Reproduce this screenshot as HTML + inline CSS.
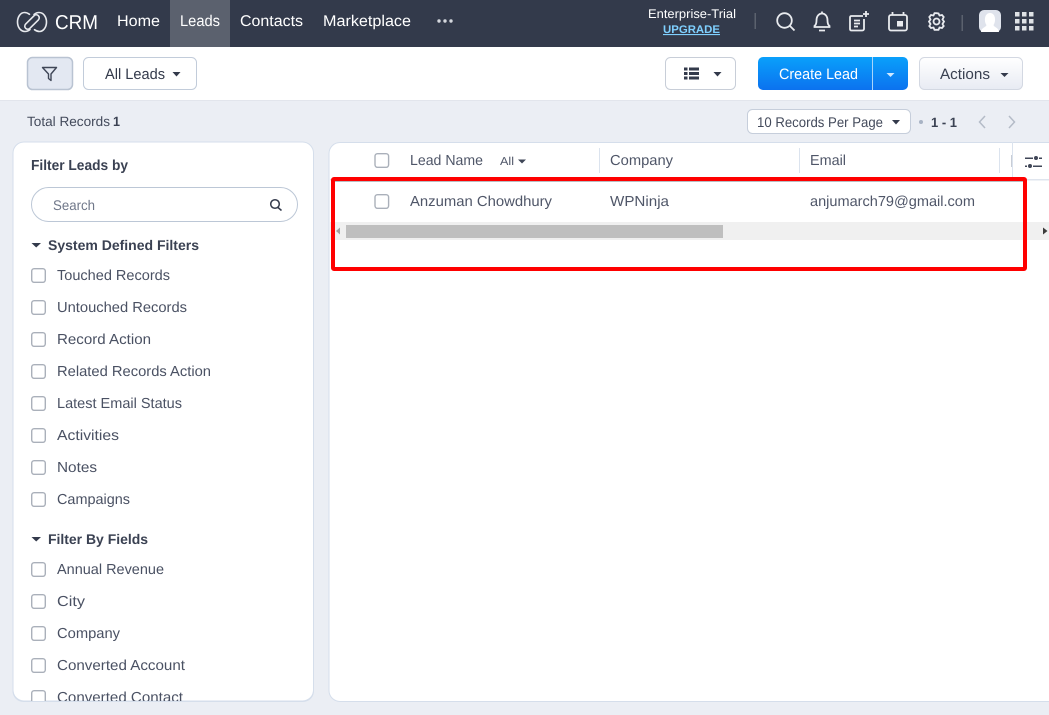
<!DOCTYPE html>
<html><head><meta charset="utf-8"><style>
html,body{margin:0;padding:0;width:1049px;height:715px;overflow:hidden;background:#ebeef4}
svg{display:block}
text{font-family:"Liberation Sans",sans-serif;font-size:14px;fill:#3f4657;text-rendering:geometricPrecision}
.n{fill:#fff;font-size:15.500px}
.f{fill:#4a5163;font-size:14.500px}
.b{font-weight:bold;fill:#3a4152}
.h{fill:#4f5668;font-size:14.500px}
</style></head><body>
<svg width="1049" height="715" viewBox="0 0 1049 715" xmlns="http://www.w3.org/2000/svg">
<defs>
<linearGradient id="bl" x1="0" y1="0" x2="0" y2="1"><stop offset="0" stop-color="#0aa0fb"/><stop offset="1" stop-color="#0b72ef"/></linearGradient>
<linearGradient id="gr" x1="0" y1="0" x2="0" y2="1"><stop offset="0" stop-color="#fff"/><stop offset="1" stop-color="#e8ebf3"/></linearGradient>
</defs>
<rect width="1049" height="715" fill="#ebeef4"/>
<rect y="47" width="1049" height="53" fill="#fff"/>
<rect y="100" width="1049" height="1" fill="#e2e5ec"/>
<rect width="1049" height="47" fill="#333a4b"/>
<rect x="170" width="60" height="47" fill="#5b616e"/>
<!-- logo -->
<g fill="none" stroke="#e8eaee" stroke-width="1.600" stroke-linecap="round">
<path d="M29.500 14.300C28 13.200 26.500 12.500 24.500 12.500C20.500 12.500 17.500 17 17.500 22C17.500 27 20.500 31.500 25 31.500C26.800 31.500 28.500 30.800 30 29.500"/>
<path transform="rotate(180 32 22)" d="M29.500 14.300C28 13.200 26.500 12.500 24.500 12.500C20.500 12.500 17.500 17 17.500 22C17.500 27 20.500 31.500 25 31.500C26.800 31.500 28.500 30.800 30 29.500"/>
<rect x="23" y="19" width="18" height="6" rx="3" transform="rotate(-45 32 22)"/>
</g>
<text x="55" y="29" class="n" style="font-size:20px" textLength="43" lengthAdjust="spacingAndGlyphs">CRM</text>
<text x="117" y="26" class="n" textLength="43" lengthAdjust="spacingAndGlyphs">Home</text>
<text x="180" y="26" class="n" textLength="40" lengthAdjust="spacingAndGlyphs">Leads</text>
<text x="240" y="26" class="n" textLength="63" lengthAdjust="spacingAndGlyphs">Contacts</text>
<text x="323" y="26" class="n" textLength="88" lengthAdjust="spacingAndGlyphs">Marketplace</text>
<g fill="#d5d8de"><circle cx="439" cy="21" r="1.700"/><circle cx="445" cy="21" r="1.700"/><circle cx="451" cy="21" r="1.700"/></g>
<text x="648" y="18" style="fill:#fff;font-size:12.500px" textLength="88" lengthAdjust="spacingAndGlyphs">Enterprise-Trial</text>
<text x="663" y="33" style="fill:#7fd0ff;font-size:11px;font-weight:bold;text-decoration:underline" textLength="57" lengthAdjust="spacingAndGlyphs">UPGRADE</text>
<rect x="754.500" y="13" width="1.500" height="16" fill="#5b616e"/>
<!-- top icons -->
<g fill="none" stroke="#e9ebef" stroke-width="1.800">
<circle cx="784.500" cy="20.500" r="7.300"/><path d="M790 26L794.500 30.500"/>
<path d="M814.500 27H829.500V26C827.500 24.500 827.500 22 827.500 20.500C827.500 16 825 13.500 822 13.500C819 13.500 816.500 16 816.500 20.500C816.500 22 816.500 24.500 814.500 26ZM822 13.500V11.500M819 30.500H825"/>
<path d="M863 16H851.500C850.500 16 850 16.500 850 17.500V29C850 30 850.500 30.500 851.500 30.500H862C863 30.500 864 30 864 29V19"/>
<path d="M854 20.500H860M854 23.500H860M854 26.500H858M866 11V17M863 14H869"/>
<rect x="889" y="15" width="18" height="15.500" rx="2"/><path d="M892.500 12V15M903.500 12V15"/>
<path d="M936.500 13.200L938.500 13.500L939.500 15.500L942 15L943.700 17L942.500 19.500L944 21.500L942.500 24L943.700 26L942 28L939.500 27.500L938.500 29.800H934.500L933.500 27.500L931 28L929.300 26L930.500 24L929 21.500L930.500 19.500L929.300 17L931 15L933.500 15.500L934.500 13.200Z"/>
<circle cx="936.500" cy="21.500" r="3"/>
</g>
<rect x="897" y="21" width="6" height="5.500" fill="#e9ebef"/>
<rect x="961.500" y="15" width="1.500" height="16" fill="#5b616e"/>
<rect x="979" y="10" width="22" height="22" rx="5" fill="#dfe3ec"/>
<path d="M981 32C981 27.500 986 27.500 986.500 25C984 22 984 13 990 13C996 13 996 22 993.500 25C994 27.500 999 27.500 999 32Z" fill="#fff"/>
<g fill="#dfe2e6">
<rect x="1015" y="12" width="4.500" height="4.500"/><rect x="1022" y="12" width="4.500" height="4.500"/><rect x="1029" y="12" width="4.500" height="4.500"/>
<rect x="1015" y="19" width="4.500" height="4.500"/><rect x="1022" y="19" width="4.500" height="4.500"/><rect x="1029" y="19" width="4.500" height="4.500"/>
<rect x="1015" y="26" width="4.500" height="4.500"/><rect x="1022" y="26" width="4.500" height="4.500"/><rect x="1029" y="26" width="4.500" height="4.500"/>
</g>
<!-- toolbar -->
<rect x="27.500" y="57.500" width="45" height="32" rx="5" fill="#e3e8f2" stroke="#b9c3d2" stroke-width="1.500"/>
<path d="M42.500 67.500H56.500L51 74V80.500L48.500 78.500V74Z" fill="none" stroke="#3f4657" stroke-width="1.400" stroke-linejoin="round"/>
<rect x="83.500" y="57.500" width="113" height="32" rx="5" fill="#fff" stroke="#c2ccda"/>
<text x="105" y="79" style="font-size:15px;fill:#333a4b" textLength="60" lengthAdjust="spacingAndGlyphs">All Leads</text>
<path d="M172.500 72H180.500L176.500 76.500Z" fill="#333a4b"/>
<rect x="665.500" y="57.500" width="70" height="32" rx="5" fill="#fff" stroke="#c8ced8"/>
<g fill="#333a4b"><rect x="684" y="67.500" width="3.500" height="3"/><rect x="689" y="67.500" width="10" height="3"/><rect x="684" y="72" width="3.500" height="3"/><rect x="689" y="72" width="10" height="3"/><rect x="684" y="76.500" width="3.500" height="3"/><rect x="689" y="76.500" width="10" height="3"/></g>
<path d="M713.500 72H721.500L717.500 76.500Z" fill="#333a4b"/>
<rect x="758" y="57" width="150" height="33" rx="5" fill="url(#bl)"/>
<rect x="872" y="57" width="1" height="33" fill="#a9d5fb"/>
<text x="779" y="79" style="font-size:15px;fill:#fff" textLength="79" lengthAdjust="spacingAndGlyphs">Create Lead</text>
<path d="M886.500 73H894.500L890.500 77Z" fill="#cfe8ff"/>
<rect x="919.500" y="57.500" width="103" height="32" rx="5" fill="url(#gr)" stroke="#d3d8e2"/>
<text x="940" y="79" style="font-size:15px;fill:#3a4152" textLength="50" lengthAdjust="spacingAndGlyphs">Actions</text>
<path d="M1000.500 73H1008.500L1004.500 77Z" fill="#333a4b"/>
<!-- records bar -->
<text x="27" y="126" style="font-size:13.500px;fill:#434a5b" textLength="83" lengthAdjust="spacingAndGlyphs">Total Records</text>
<text x="113" y="126" class="b" style="font-size:13.500px" textLength="7" lengthAdjust="spacingAndGlyphs">1</text>
<rect x="747.500" y="109.500" width="163" height="24" rx="5" fill="#fff" stroke="#c6cedb"/>
<text x="757" y="127" style="font-size:14px;fill:#434a5b" textLength="126" lengthAdjust="spacingAndGlyphs">10 Records Per Page</text>
<path d="M892 120H900L896 124.500Z" fill="#333a4b"/>
<circle cx="921" cy="122" r="2" fill="#a8b3c4"/>
<text x="931" y="127" class="b" style="font-size:13.500px" textLength="26" lengthAdjust="spacingAndGlyphs">1 - 1</text>
<path d="M985 116L979.500 122L985 128" fill="none" stroke="#b4bbc7" stroke-width="1.500"/>
<path d="M1009 116L1014.500 122L1009 128" fill="none" stroke="#b4bbc7" stroke-width="1.500"/>
<!-- left panel -->
<rect x="13" y="142" width="300.500" height="559" rx="11" fill="#fff" stroke="#d5deeb"/>
<text x="31" y="170" class="b" style="font-size:14.500px" textLength="97" lengthAdjust="spacingAndGlyphs">Filter Leads by</text>
<rect x="31.500" y="187.500" width="266" height="34" rx="17" fill="#fff" stroke="#bcc7d6"/>
<text x="53" y="210" style="font-size:14px;fill:#6f7789" textLength="42" lengthAdjust="spacingAndGlyphs">Search</text>
<circle cx="275" cy="204" r="4.300" fill="none" stroke="#333a4b" stroke-width="1.500"/>
<path d="M278 207.500L281.500 210.500" stroke="#333a4b" stroke-width="1.500"/>
<path d="M31.500 243H41L36.200 247.500Z" fill="#333a4b"/>
<text x="48" y="250" class="b" textLength="151" lengthAdjust="spacingAndGlyphs">System Defined Filters</text>
<path d="M31.500 537H41L36.200 541.500Z" fill="#333a4b"/>
<text x="48" y="544" class="b" textLength="100" lengthAdjust="spacingAndGlyphs">Filter By Fields</text>
<g fill="#fff" stroke="#aab0ba" stroke-width="1.400">
<rect x="31.700" y="268.700" width="13.600" height="13.600" rx="2.500"/>
<rect x="31.700" y="300.700" width="13.600" height="13.600" rx="2.500"/>
<rect x="31.700" y="332.700" width="13.600" height="13.600" rx="2.500"/>
<rect x="31.700" y="364.700" width="13.600" height="13.600" rx="2.500"/>
<rect x="31.700" y="396.700" width="13.600" height="13.600" rx="2.500"/>
<rect x="31.700" y="428.700" width="13.600" height="13.600" rx="2.500"/>
<rect x="31.700" y="460.700" width="13.600" height="13.600" rx="2.500"/>
<rect x="31.700" y="492.700" width="13.600" height="13.600" rx="2.500"/>
<rect x="31.700" y="562.700" width="13.600" height="13.600" rx="2.500"/>
<rect x="31.700" y="594.700" width="13.600" height="13.600" rx="2.500"/>
<rect x="31.700" y="626.700" width="13.600" height="13.600" rx="2.500"/>
<rect x="31.700" y="658.700" width="13.600" height="13.600" rx="2.500"/>
<rect x="31.700" y="690.700" width="13.600" height="13.600" rx="2.500"/>
</g>
<text x="57" y="280" class="f" textLength="113" lengthAdjust="spacingAndGlyphs">Touched Records</text>
<text x="57" y="312" class="f" textLength="130" lengthAdjust="spacingAndGlyphs">Untouched Records</text>
<text x="57" y="344" class="f" textLength="94" lengthAdjust="spacingAndGlyphs">Record Action</text>
<text x="57" y="376" class="f" textLength="154" lengthAdjust="spacingAndGlyphs">Related Records Action</text>
<text x="57" y="408" class="f" textLength="125" lengthAdjust="spacingAndGlyphs">Latest Email Status</text>
<text x="57" y="440" class="f" textLength="62" lengthAdjust="spacingAndGlyphs">Activities</text>
<text x="57" y="472" class="f" textLength="40" lengthAdjust="spacingAndGlyphs">Notes</text>
<text x="57" y="504" class="f" textLength="73" lengthAdjust="spacingAndGlyphs">Campaigns</text>
<text x="57" y="574" class="f" textLength="107" lengthAdjust="spacingAndGlyphs">Annual Revenue</text>
<text x="57" y="606" class="f" textLength="28" lengthAdjust="spacingAndGlyphs">City</text>
<text x="57" y="638" class="f" textLength="63" lengthAdjust="spacingAndGlyphs">Company</text>
<text x="57" y="670" class="f" textLength="128" lengthAdjust="spacingAndGlyphs">Converted Account</text>
<text x="57" y="702" class="f" textLength="126" lengthAdjust="spacingAndGlyphs">Converted Contact</text>
<rect x="0" y="701.500" width="1049" height="14" fill="#ebeef4"/>
<path d="M13 690V691A10.500 10.500 0 0 0 23.500 701.500H303A10.500 10.500 0 0 0 313.500 691V690" fill="none" stroke="#d5deeb"/>
<!-- right panel -->
<path d="M1050 142.500H340A11 11 0 0 0 329 153.500V690.500A11 11 0 0 0 340 701.500H1050Z" fill="#fff" stroke="#d5deeb"/>
<rect x="330" y="179" width="719" height="1.500" fill="#dfe5ee"/>
<rect x="375" y="153.700" width="13.600" height="13.600" rx="2.500" fill="#fff" stroke="#aab0ba" stroke-width="1.400"/>
<text x="410" y="165" class="h" textLength="73" lengthAdjust="spacingAndGlyphs">Lead Name</text>
<text x="500" y="165" style="font-size:11.500px;fill:#4f5668" textLength="14" lengthAdjust="spacingAndGlyphs">All</text>
<path d="M518 159.500H526L522 163.500Z" fill="#3f4657"/>
<rect x="599" y="148" width="1" height="25" fill="#dbe3ee"/>
<text x="610" y="165" class="h" textLength="63" lengthAdjust="spacingAndGlyphs">Company</text>
<rect x="799" y="148" width="1" height="25" fill="#dbe3ee"/>
<text x="810" y="165" class="h" textLength="36" lengthAdjust="spacingAndGlyphs">Email</text>
<rect x="999" y="148" width="1" height="25" fill="#dbe3ee"/>
<rect x="1011" y="155" width="1" height="12" fill="#c8cdd6"/>
<rect x="1012" y="142" width="1" height="37" fill="#dbe3ee"/>
<g fill="#3f4657"><rect x="1025" y="157.500" width="8" height="1.500"/><circle cx="1036" cy="158" r="2"/><rect x="1039" y="157.500" width="3" height="1.500"/><rect x="1025" y="165.500" width="2" height="1.500"/><circle cx="1030" cy="166" r="2"/><rect x="1033" y="165.500" width="9" height="1.500"/></g>
<rect x="375" y="194.700" width="13.600" height="13.600" rx="2.500" fill="#fff" stroke="#aab0ba" stroke-width="1.400"/>
<text x="410" y="206" class="h" textLength="142" lengthAdjust="spacingAndGlyphs">Anzuman Chowdhury</text>
<text x="610" y="206" class="h" textLength="59" lengthAdjust="spacingAndGlyphs">WPNinja</text>
<text x="810" y="206" class="h" textLength="165" lengthAdjust="spacingAndGlyphs">anjumarch79@gmail.com</text>
<rect x="330" y="222" width="719" height="18" fill="#f0f0f0"/>
<rect x="346" y="225" width="377" height="13" fill="#bfbfbf"/>
<path d="M340 227.500V234.500L336 231Z" fill="#a0a0a0"/>
<path d="M1043 227.500V234.500L1047.500 231Z" fill="#3c3c3c"/>
<rect x="333" y="179" width="692" height="90" rx="1" fill="none" stroke="#ff0000" stroke-width="4"/>
<rect x="335" y="181" width="688" height="1" fill="#8a8f98" opacity=".6"/>
</svg>
</body></html>
